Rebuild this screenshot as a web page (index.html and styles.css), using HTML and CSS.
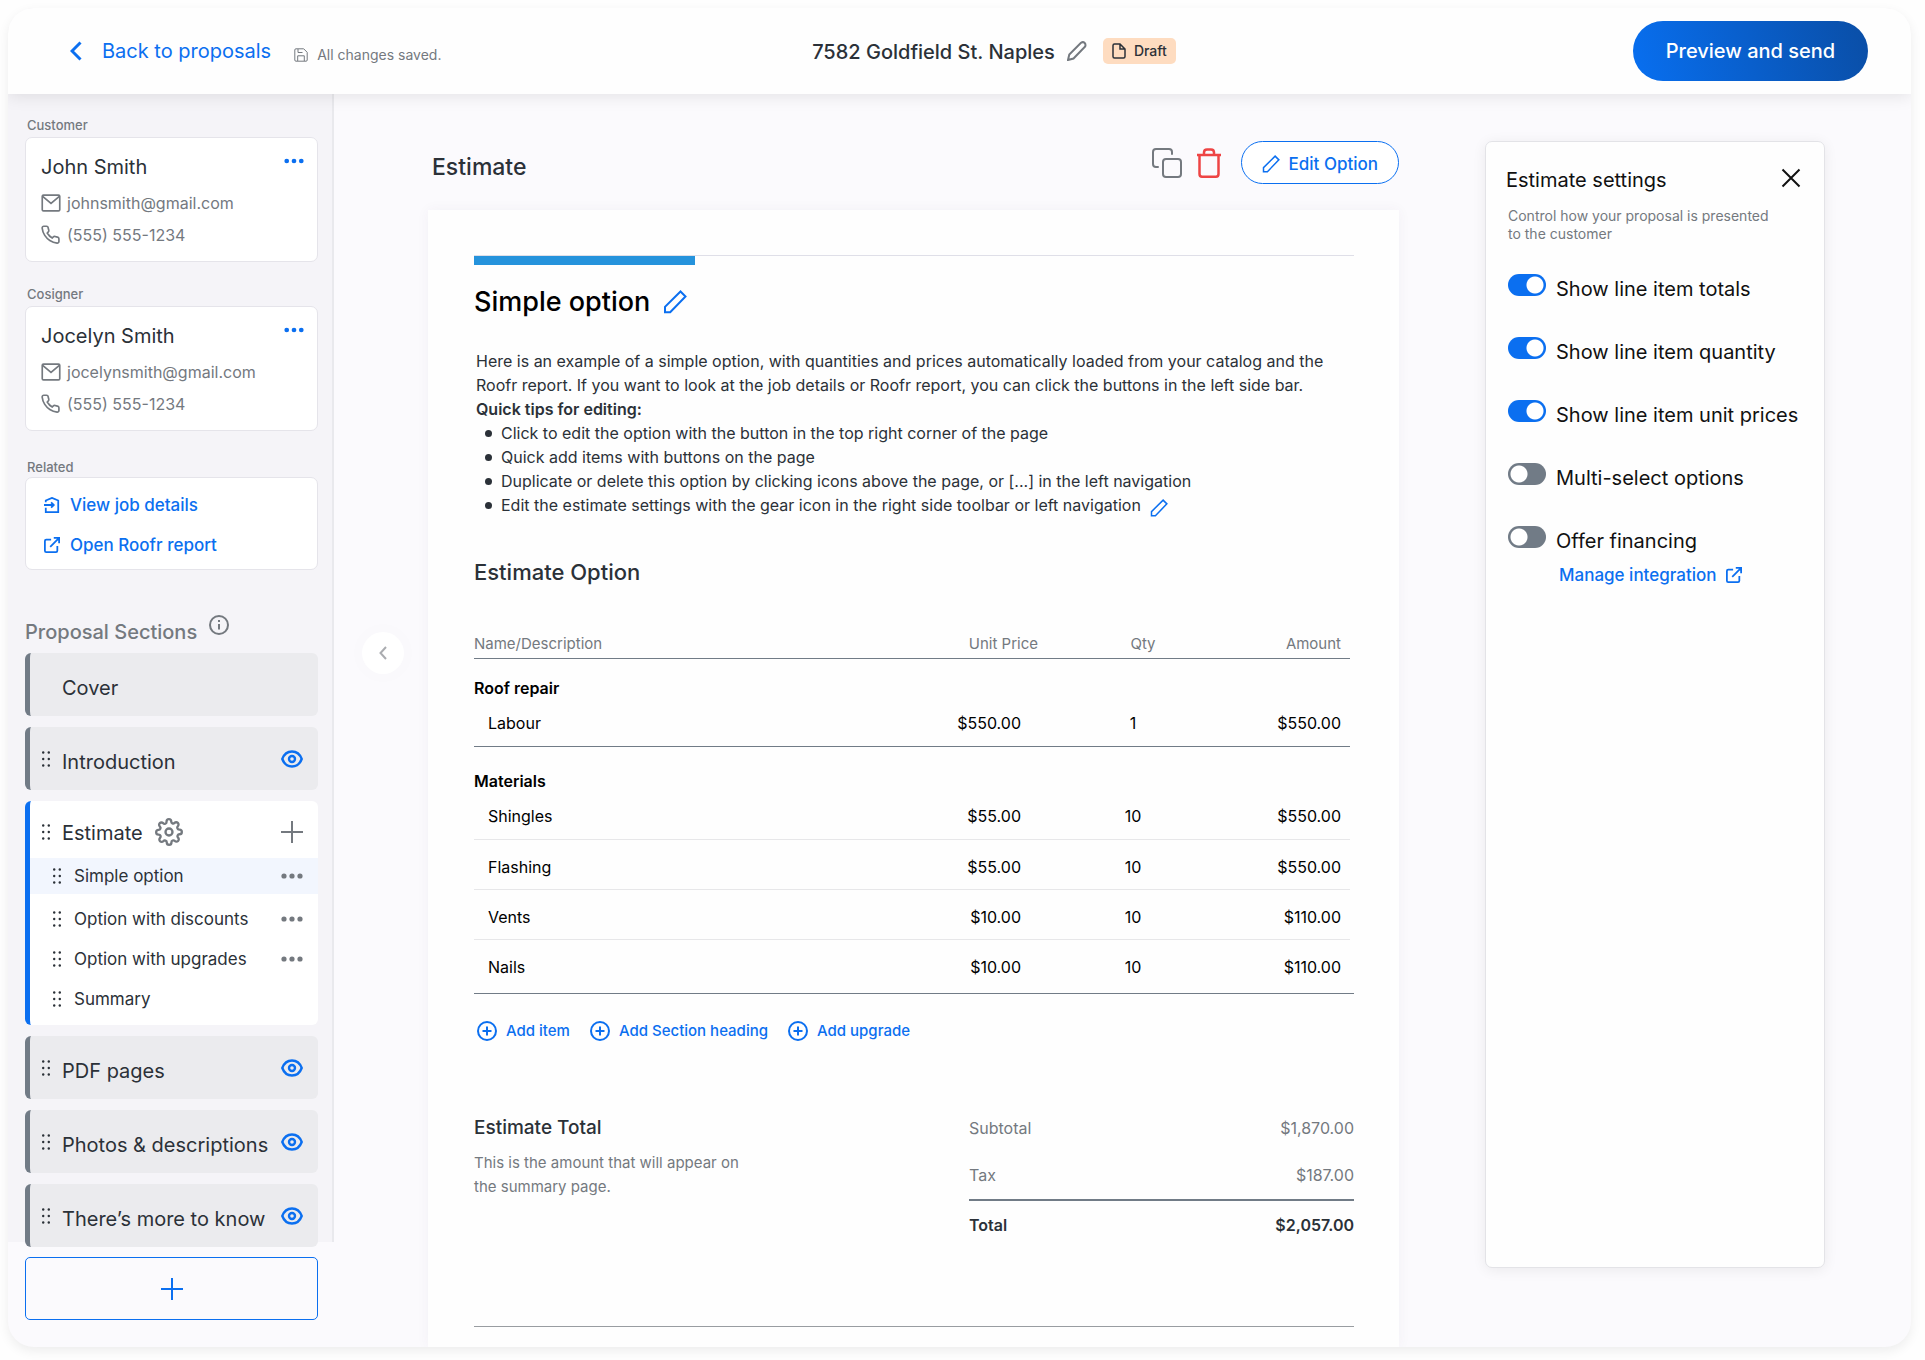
FILE: index.html
```html
<!DOCTYPE html>
<html lang="en">
<head>
<meta charset="utf-8">
<meta name="viewport" content="width=device-width, initial-scale=1">
<title>7582 Goldfield St. Naples – Proposal</title>
<link rel="stylesheet" href="styles.css">
</head>
<body>
<svg class="sprite" aria-hidden="true">
  <symbol id="mail" viewBox="0 0 24 24"><rect x="1.500" y="2.500" width="21" height="19" rx="1.500"/><path d="M2 4l10 8.500L22 4"/></symbol>
  <symbol id="phone" viewBox="0 0 24 24"><path d="M22.500 17.400v3.300a2 2 0 0 1-2.200 2A20 20 0 0 1 11.600 19.600a19.700 19.700 0 0 1-6.100-6.100A20 20 0 0 1 2.400 4.700a2 2 0 0 1 2-2.200h3.200a2 2 0 0 1 2 1.700c.1 1 .4 2 .7 2.900a2 2 0 0 1-.5 2.100L8.500 10.600a16 16 0 0 0 6 6l1.300-1.300a2 2 0 0 1 2.100-.5c.9.300 1.900.6 2.900.7a2 2 0 0 1 1.700 1.900z" transform="translate(-1 -1)"/></symbol>
  <symbol id="grip" viewBox="0 0 8 16"><g class="dot"><circle cx="1.200" cy="1.500" r="1.200"/><circle cx="6.800" cy="1.500" r="1.200"/><circle cx="1.200" cy="8" r="1.200"/><circle cx="6.800" cy="8" r="1.200"/><circle cx="1.200" cy="14.500" r="1.200"/><circle cx="6.800" cy="14.500" r="1.200"/></g></symbol>
  <symbol id="dots" viewBox="0 0 22 6"><g class="dot"><circle cx="3" cy="3" r="2.600"/><circle cx="11" cy="3" r="2.600"/><circle cx="19" cy="3" r="2.600"/></g></symbol>
  <symbol id="eye" viewBox="0 0 22 18"><path d="M1.300 9C3 4.300 6.600 1.500 11 1.500S19 4.300 20.700 9C19 13.700 15.400 16.500 11 16.500S3 13.700 1.300 9z"/><circle cx="11" cy="9" r="3"/></symbol>
  <symbol id="plus" viewBox="0 0 22 22"><path d="M11 0v22M0 11h22"/></symbol>
  <symbol id="plus-circle" viewBox="0 0 20 20"><circle cx="10" cy="10" r="9"/><path d="M10 5.500v9M5.500 10h9"/></symbol>
  <symbol id="external" viewBox="0 0 18 18"><path d="M8 3H2.500Q1 3 1 4.500v11Q1 17 2.500 17h11q1.500 0 1.500-1.500V10M11 1h6v6M17 1L7 11"/></symbol>
  <symbol id="pencil" viewBox="0 0 24 24"><path d="M2 22.300v-5.500L17.500 1.500l5 5L7.200 22.300z"/></symbol>
</svg>

<div class="app">
  <header class="topbar">
    <div class="topbar-left">
      <a class="back" href="#proposals">
        <svg class="chevron" viewBox="0 0 12 20"><path d="M10.500 1.500L2 10l8.500 8.500"/></svg>
        Back to proposals
      </a>
      <span class="saved">
        <svg class="icon-14" viewBox="0 0 14 14"><path d="M2 .8h7.700l3.500 3.500V12q0 1.200-1.200 1.200H2Q.8 13.200.8 12V2Q.8.800 2 .8zM4 1v3.500h4.500M3.700 13V7.800h6.600V13"/></svg>
        All changes saved.
      </span>
    </div>
    <div class="topbar-title">
      <h1>7582 Goldfield St. Naples</h1>
      <button class="icon-button grey" aria-label="Rename proposal">
        <svg class="icon-20" viewBox="0 0 20 20"><path d="M1 19l1.300-5.500L14 1.800q2-1.400 3.500 0t.7 3.700L6.500 17.500z"/></svg>
      </button>
      <span class="badge">
        <svg class="icon-file" viewBox="0 0 14 16"><path d="M2.500 1H8l5 5v7.500q0 1.500-1.500 1.500h-9Q1 15 1 13.500v-11Q1 1 2.500 1zM8 1v5h5"/></svg>
        Draft
      </span>
    </div>
    <button class="send">Preview and send</button>
  </header>

  <div class="body">
    <aside class="sidebar">
      <div class="sidebar-main">
        <section class="contact">
          <h2 class="label">Customer</h2>
          <div class="card">
            <button class="icon-button more blue" aria-label="Customer actions"><svg class="dots-s"><use href="#dots"/></svg></button>
            <h3>John Smith</h3>
            <p><svg class="icon-20"><use href="#mail"/></svg>johnsmith@gmail.com</p>
            <p><svg class="icon-20"><use href="#phone"/></svg>(555) 555-1234</p>
          </div>
        </section>
        <section class="contact">
          <h2 class="label">Cosigner</h2>
          <div class="card">
            <button class="icon-button more blue" aria-label="Cosigner actions"><svg class="dots-s"><use href="#dots"/></svg></button>
            <h3>Jocelyn Smith</h3>
            <p><svg class="icon-20"><use href="#mail"/></svg>jocelynsmith@gmail.com</p>
            <p><svg class="icon-20"><use href="#phone"/></svg>(555) 555-1234</p>
          </div>
        </section>
        <section class="related">
          <h2 class="label">Related</h2>
          <div class="card links">
            <a href="#job"><svg class="icon-16" viewBox="0 0 18 18"><path d="M2 6V4l7-3 7 3v13H2v-5M0 9h11M8 6l3 3-3 3"/></svg>View job details</a>
            <a href="#report"><svg class="icon-16"><use href="#external"/></svg>Open Roofr report</a>
          </div>
        </section>

        <div class="sections-title">
          <h2>Proposal Sections</h2>
          <svg class="icon-20" viewBox="0 0 20 20"><circle cx="10" cy="10" r="9"/><path d="M10 9v5.500M10 5v2"/></svg>
        </div>
        <nav class="sections">
          <div class="item"><span></span><a href="#cover">Cover</a></div>
          <div class="item"><svg class="grip"><use href="#grip"/></svg><a href="#introduction">Introduction</a><button class="icon-button blue" aria-label="Toggle Introduction"><svg class="eye"><use href="#eye"/></svg></button></div>
          <div class="group">
            <div class="group-head">
              <svg class="grip"><use href="#grip"/></svg>
              <a href="#estimate">Estimate</a>
              <button class="icon-button grey gear-button" aria-label="Estimate settings"><svg class="gear" viewBox="0 0 24 24"><circle cx="12" cy="12" r="3"/><path d="M19.400 15a1.650 1.650 0 0 0 .33 1.820l.06.060a2 2 0 1 1-2.830 2.830l-.06-.06a1.650 1.650 0 0 0-2.800 1.180V21a2 2 0 1 1-4 0v-.09a1.650 1.650 0 0 0-2.900-1.080l-.06.060a2 2 0 1 1-2.830-2.830l.06-.06a1.650 1.650 0 0 0-1.180-2.800H3a2 2 0 1 1 0-4h.09a1.650 1.650 0 0 0 1.080-2.900l-.06-.06a2 2 0 1 1 2.830-2.830l.06.060a1.650 1.650 0 0 0 2.900-1.080V3a2 2 0 1 1 4 0v.09a1.650 1.650 0 0 0 2.800 1.180l.06-.06a2 2 0 1 1 2.830 2.830l-.06.060a1.650 1.650 0 0 0 1.180 2.800H21a2 2 0 1 1 0 4h-.09a1.650 1.650 0 0 0-1.510 1z"/></svg></button>
              <button class="icon-button grey" aria-label="Add option"><svg class="plus"><use href="#plus"/></svg></button>
            </div>
            <div class="sub active"><svg class="grip"><use href="#grip"/></svg><a href="#simple">Simple option</a><button class="icon-button grey" aria-label="Simple option actions"><svg class="dots"><use href="#dots"/></svg></button></div>
            <div class="sub"><svg class="grip"><use href="#grip"/></svg><a href="#discounts">Option with discounts</a><button class="icon-button grey" aria-label="Option with discounts actions"><svg class="dots"><use href="#dots"/></svg></button></div>
            <div class="sub"><svg class="grip"><use href="#grip"/></svg><a href="#upgrades">Option with upgrades</a><button class="icon-button grey" aria-label="Option with upgrades actions"><svg class="dots"><use href="#dots"/></svg></button></div>
            <div class="sub"><svg class="grip"><use href="#grip"/></svg><a href="#summary">Summary</a></div>
          </div>
          <div class="item"><svg class="grip"><use href="#grip"/></svg><a href="#pdf">PDF pages</a><button class="icon-button blue" aria-label="Toggle PDF pages"><svg class="eye"><use href="#eye"/></svg></button></div>
          <div class="item"><svg class="grip"><use href="#grip"/></svg><a href="#photos">Photos &amp; descriptions</a><button class="icon-button blue" aria-label="Toggle Photos &amp; descriptions"><svg class="eye"><use href="#eye"/></svg></button></div>
          <div class="item"><svg class="grip"><use href="#grip"/></svg><a href="#more">There’s more to know</a><button class="icon-button blue" aria-label="Toggle There’s more to know"><svg class="eye"><use href="#eye"/></svg></button></div>
        </nav>
      </div>
      <div class="sidebar-foot">
        <button class="add-section" aria-label="Add section"><svg class="plus"><use href="#plus"/></svg></button>
      </div>
    </aside>

    <div class="collapse-column">
      <button class="collapse" aria-label="Collapse sidebar"><svg viewBox="0 0 8 14"><path d="M7 1L1.500 7 7 13"/></svg></button>
    </div>

    <main class="document">
      <div class="toolbar">
        <h2>Estimate</h2>
        <button class="icon-button grey" aria-label="Duplicate option"><svg class="icon-30" viewBox="0 0 30 30"><rect x="11" y="11" width="18" height="18" rx="3"/><path d="M6 19H4Q1 19 1 16V4Q1 1 4 1h13Q20 1 20 4v2"/></svg></button>
        <button class="icon-button red" aria-label="Delete option"><svg class="icon-trash" viewBox="0 0 26 30"><path d="M1 7h24M8 7V4.500Q8 1.500 11 1.500h4Q18 1.500 18 4.500v2.500M3.500 7v19q0 2.700 2.500 2.700h14q2.500 0 2.500-2.700V7"/></svg></button>
        <button class="edit-option"><svg class="icon-18"><use href="#pencil"/></svg>Edit Option</button>
      </div>

      <article class="paper">
        <div class="rule"><span class="rule-accent"></span></div>
        <div class="title-row">
          <h3>Simple option</h3>
          <button class="icon-button blue" aria-label="Edit title"><svg class="icon-24"><use href="#pencil"/></svg></button>
        </div>
        <div class="intro">
          <p>Here is an example of a simple option, with quantities and prices automatically loaded from your catalog and the<br>Roofr report. If you want to look at the job details or Roofr report, you can click the buttons in the left side bar.</p>
          <p><strong>Quick tips for editing:</strong></p>
          <ul>
            <li>Click to edit the option with the button in the top right corner of the page</li>
            <li>Quick add items with buttons on the page</li>
            <li>Duplicate or delete this option by clicking icons above the page, or [...] in the left navigation</li>
            <li>Edit the estimate settings with the gear icon in the right side toolbar or left navigation <button class="icon-button blue inline" aria-label="Edit description"><svg class="icon-18"><use href="#pencil"/></svg></button></li>
          </ul>
        </div>

        <h4 class="table-title">Estimate Option</h4>
        <table>
          <thead>
            <tr><th>Name/Description</th><th class="price">Unit Price</th><th class="qty">Qty</th><th class="amount">Amount</th></tr>
          </thead>
          <tbody>
            <tr class="heading"><th colspan="4">Roof repair</th></tr>
            <tr><td>Labour</td><td class="price">$550.00</td><td class="qty">1</td><td class="amount">$550.00</td></tr>
          </tbody>
          <tbody>
            <tr class="heading"><th colspan="4">Materials</th></tr>
            <tr><td>Shingles</td><td class="price">$55.00</td><td class="qty">10</td><td class="amount">$550.00</td></tr>
            <tr><td>Flashing</td><td class="price">$55.00</td><td class="qty">10</td><td class="amount">$550.00</td></tr>
            <tr><td>Vents</td><td class="price">$10.00</td><td class="qty">10</td><td class="amount">$110.00</td></tr>
            <tr><td>Nails</td><td class="price">$10.00</td><td class="qty">10</td><td class="amount">$110.00</td></tr>
          </tbody>
        </table>
        <div class="actions">
          <button><svg class="icon-20"><use href="#plus-circle"/></svg>Add item</button>
          <button><svg class="icon-20"><use href="#plus-circle"/></svg>Add Section heading</button>
          <button><svg class="icon-20"><use href="#plus-circle"/></svg>Add upgrade</button>
        </div>

        <div class="totals">
          <div class="totals-note">
            <h4>Estimate Total</h4>
            <p>This is the amount that will appear on<br>the summary page.</p>
          </div>
          <dl>
            <div><dt>Subtotal</dt><dd>$1,870.00</dd></div>
            <div><dt>Tax</dt><dd>$187.00</dd></div>
            <div class="grand"><dt>Total</dt><dd>$2,057.00</dd></div>
          </dl>
        </div>
      </article>
    </main>

    <aside class="settings">
      <div class="settings-head">
        <h2>Estimate settings</h2>
        <button class="icon-button" aria-label="Close settings"><svg class="icon-20" viewBox="0 0 20 20"><path d="M1.500 1.500l17 17M18.500 1.500l-17 17"/></svg></button>
      </div>
      <p>Control how your proposal is presented<br>to the customer</p>
      <label><input type="checkbox" checked><span>Show line item totals</span></label>
      <label><input type="checkbox" checked><span>Show line item quantity</span></label>
      <label><input type="checkbox" checked><span>Show line item unit prices</span></label>
      <label><input type="checkbox"><span>Multi-select options</span></label>
      <label><input type="checkbox"><span>Offer financing</span></label>
      <a class="manage" href="#integration">Manage integration<svg class="icon-16"><use href="#external"/></svg></a>
    </aside>
  </div>
</div>
</body>
</html>
```
FILE: styles.css
```css
* { box-sizing: border-box; }

:root {
  --blue: #0b6ff0;
  --ink: #2b3138;
  --grey: #74797f;
  --slate: #717b86;
}

body {
  margin: 0;
  min-height: 100vh;
  padding: 8px 14px 14px 8px;
  display: flex;
  background: #fefefe;
  color: var(--ink);
  font: 400 15px/20px Inter, "Liberation Sans", sans-serif;
}

h1, h2, h3, h4, p, ul, dl, dd { margin: 0; padding: 0; }
a { color: inherit; text-decoration: none; }
button { font: inherit; cursor: pointer; }
svg { display: block; flex: none; fill: none; stroke: currentColor; stroke-width: 2; }
.dot { fill: currentColor; stroke: none; }
.sprite { position: absolute; width: 0; height: 0; }

.icon-button { display: flex; padding: 0; border: 0; background: none; color: #111; }
.icon-button.blue { color: var(--blue); }
.icon-button.grey { color: var(--grey); }
.icon-button.red { color: #ee4444; }
.icon-14 { width: 14px; height: 14px; stroke-width: 1; }
.icon-16 { width: 16px; height: 16px; }
.icon-18 { width: 18px; height: 18px; }
.icon-20 { width: 20px; height: 20px; }
.icon-24 { width: 24px; height: 24px; }
.icon-30 { width: 30px; height: 30px; stroke-linecap: round; }
.icon-trash { width: 26px; height: 30px; stroke-width: 2.5; }
.icon-file { width: 14px; height: 16px; stroke-width: 1.5; }
.chevron { width: 12px; height: 20px; stroke-width: 3; }
.grip { width: 8px; height: 16px; }
.eye { width: 22px; height: 18px; stroke-width: 2.4; }
.dots { width: 22px; height: 6px; }
.dots-s { width: 20px; height: 6px; }
.plus { width: 22px; height: 22px; }
.gear { width: 28px; height: 28px; }

.app {
  flex: 1;
  min-width: 0;
  display: flex;
  flex-direction: column;
  overflow: hidden;
  border-radius: 26px;
  background: #fbfafd;
  box-shadow: 0 4px 12px rgba(0, 0, 0, 0.07);
}

/* Top bar */
.topbar {
  z-index: 1;
  display: grid;
  grid-template-columns: 1fr auto 1fr;
  align-items: center;
  height: 86px;
  padding: 0 43px 0 62px;
  background: #fefefe;
  box-shadow: 0 2px 16px rgba(0, 0, 0, 0.1);
}
.topbar-left, .back, .saved, .topbar-title, .badge { display: flex; align-items: center; }
.topbar-left { gap: 23px; }
.back { gap: 20px; color: var(--blue); font-size: 20px; line-height: 26px; }
.saved { gap: 9px; padding-top: 8px; color: var(--grey); font-size: 14px; }
.topbar-title { gap: 12px; padding-left: 50px; }
.topbar-title h1 { padding-top: 2px; font-size: 20px; line-height: 26px; font-weight: 500; }
.badge { gap: 8px; height: 26px; margin-left: 4px; padding: 0 9px; border-radius: 5px; background: #fedcc0; font-size: 14px; font-weight: 500; }
.send {
  justify-self: end;
  width: 235px;
  height: 60px;
  border: 0;
  border-radius: 30px;
  background: linear-gradient(75deg, #086ff0, #0a4ea6);
  color: #fff;
  font-size: 20px;
  font-weight: 500;
}

.body { flex: 1; display: flex; }

/* Sidebar */
.sidebar { flex: none; width: 326px; display: flex; flex-direction: column; }
.sidebar-main { flex: 1; padding: 21px 14px 0 17px; border-right: 2px solid #e9e9ed; background: #f5f4f8; }
.label { padding-left: 2px; margin-bottom: 2px; color: var(--grey); font-size: 13px; line-height: 20px; font-weight: 500; }
.contact { margin-bottom: 22px; }
.card { position: relative; border: 1px solid #e5e4ea; border-radius: 7px; background: #fff; padding: 15px 15px 10px; }
.card h3 { margin-bottom: 6px; font-size: 20px; line-height: 28px; font-weight: 400; }
.card p { display: flex; align-items: center; gap: 6px; color: var(--grey); font-size: 16px; line-height: 32px; }
.more { position: absolute; top: 20px; right: 13px; }
.related { margin-top: 26px; }
.related .label { margin-bottom: 0; }
.links { padding: 7px 18px 4px; }
.links a { display: flex; align-items: center; gap: 10px; color: var(--blue); font-size: 17px; line-height: 40px; font-weight: 500; }

.sections-title { display: flex; gap: 12px; margin: 45px 0 5px; color: var(--grey); }
.sections-title h2 { font-size: 20px; line-height: 32px; font-weight: 500; padding-top: 1px; }
.sections { display: grid; gap: 11px; margin-bottom: -5px; }
.item, .group-head, .sub { display: grid; align-items: center; }
.item {
  grid-template-columns: 8px 1fr auto;
  gap: 12px;
  height: 63px;
  padding: 0 15px 0 12px;
  border-left: 5px solid var(--slate);
  border-radius: 6px;
  background: #ebebee;
}
.item a { padding-top: 6px; }
.item a, .group-head a { font-size: 20px; line-height: 24px; white-space: nowrap; }
.group { padding-bottom: 6px; border-left: 5px solid var(--blue); border-radius: 6px; background: #fff; }
.group-head { grid-template-columns: 8px auto 1fr auto; gap: 12px; height: 57px; padding: 4px 15px 0 12px; }
.group-head a { padding-top: 2px; }
.sub { grid-template-columns: 8px 1fr auto; gap: 13px; height: 40px; padding: 0 15px 0 23px; font-size: 17px; }
.sub.active { height: 36px; margin-bottom: 5px; background: #f2f6fe; }
.sidebar-foot { padding: 15px 16px 27px 17px; }
.add-section {
  display: flex;
  align-items: center;
  justify-content: center;
  width: 100%;
  height: 63px;
  border: 1px solid var(--blue);
  border-radius: 5px;
  background: none;
  color: var(--blue);
}

.collapse-column { flex: none; width: 94px; padding: 538px 0 0 28px; }
.collapse {
  display: grid;
  place-items: center;
  width: 42px;
  height: 42px;
  padding: 0;
  border: 0;
  border-radius: 50%;
  background: #fff;
  color: #aaacb0;
  box-shadow: 0 0 30px rgba(0, 0, 0, 0.02);
}
.collapse svg { width: 8px; height: 14px; }

/* Document */
.document { flex: 1; min-width: 0; display: flex; flex-direction: column; padding-top: 47px; }
.toolbar { display: flex; align-items: center; gap: 14px; height: 43px; margin-bottom: 26px; padding-left: 4px; }
.toolbar h2 { flex: 1; padding-top: 9px; font-size: 23px; line-height: 28px; font-weight: 500; }
.edit-option {
  display: flex;
  align-items: center;
  gap: 9px;
  height: 43px;
  margin-left: 5px;
  padding: 2px 20px 0;
  border: 1px solid var(--blue);
  border-radius: 22px;
  background: #fff;
  color: var(--blue);
  font-size: 17px;
  font-weight: 500;
}
.paper { flex: 1; padding: 45px 45px 19px 46px; background: #fefefe; box-shadow: 0 0 12px rgba(70, 60, 100, 0.05); }
.rule { height: 10px; border-top: 1px solid #dfdfe8; }
.rule-accent { display: block; width: 221px; height: 9px; background: #2593dc; }
.title-row { display: flex; align-items: center; gap: 13px; margin: 18px 0 29px; color: #000; }
.title-row h3 { padding-top: 1px; font-size: 27px; line-height: 36px; font-weight: 500; }
.intro { padding-left: 2px; font-size: 16px; line-height: 24px; }
.intro strong { font-weight: 600; }
.intro ul { list-style: none; }
.intro li { display: flex; align-items: center; gap: 9px; height: 24px; padding-left: 9px; white-space: nowrap; }
.intro li::before { content: ""; flex: none; width: 7px; height: 7px; border-radius: 50%; background: currentColor; }
.inline { padding-top: 6px; }
.table-title { margin: 41px 0 48px; font-size: 22px; line-height: 28px; font-weight: 500; }

table { width: calc(100% - 4px); border-collapse: separate; border-spacing: 0; color: #000; table-layout: fixed; }
th, td { padding: 0; text-align: left; line-height: 20px; }
thead th { padding-bottom: 4px; border-bottom: 1px solid var(--slate); color: var(--grey); font-weight: 400; }
tbody { font-size: 16px; }
.heading th { padding: 24px 0 8px; font-weight: 600; }
thead + tbody .heading th { padding-top: 19px; }
td { padding: 17px 0 12px; border-bottom: 1px solid #e7e7e9; }
td:first-child { padding-left: 14px; }
.heading + tr td { padding-top: 7px; padding-bottom: 13px; }
thead + tbody tr:last-child td { border-color: var(--slate); }
tbody:last-child tr:last-child td { padding-bottom: 16px; border: 0; }
.price { width: 140px; text-align: right; }
td.price { padding-right: 17px; }
.qty { width: 210px; text-align: center; }
td.qty { padding-right: 20px; }
.amount { width: 102px; padding-right: 9px; text-align: right; }

.actions { display: flex; gap: 20px; padding: 27px 0 0 3px; border-top: 1px solid var(--slate); }
.actions button { display: flex; align-items: center; gap: 9px; padding: 0; border: 0; background: none; color: var(--blue); font-size: 15px; font-weight: 500; }
.totals { display: flex; justify-content: space-between; margin-top: 64px; padding-bottom: 76px; border-bottom: 1px solid #999da1; }
.totals-note { padding-top: 9px; color: var(--grey); line-height: 24px; }
.totals-note h4 { margin-bottom: 9px; color: var(--ink); font-size: 19px; line-height: 28px; font-weight: 500; }
.totals dl { width: 385px; color: var(--grey); font-size: 16px; line-height: 47px; }
.totals dl div { display: flex; justify-content: space-between; }
.totals .grand { border-top: 2px solid var(--slate); color: var(--ink); font-weight: 600; line-height: 49px; }

/* Settings */
.settings {
  flex: none;
  width: 340px;
  margin: 47px 86px 79px;
  padding: 22px 20px;
  border: 1px solid #e3e3e7;
  border-radius: 7px;
  background: #fefefe;
  color: #111;
  box-shadow: 0 2px 14px rgba(0, 0, 0, 0.07);
}
.settings-head { display: flex; justify-content: space-between; padding: 0 3px 0 0; }
.settings-head h2 { padding-top: 2px; font-size: 20px; line-height: 28px; font-weight: 400; }
.settings-head button { padding: 4px 0; }
.settings p { margin: 13px 0 28px 2px; color: var(--grey); font-size: 14px; line-height: 18px; }
.settings label { display: flex; align-items: flex-start; gap: 10px; height: 63px; margin-left: 2px; font-size: 20px; line-height: 36px; white-space: nowrap; }
.settings input {
  appearance: none;
  width: 38px;
  height: 22px;
  margin: 3px 0 0;
  border-radius: 11px;
  background: radial-gradient(circle at 11px 11px, #fff 8px, transparent 9px) var(--slate);
}
.settings input:checked { background: radial-gradient(circle at 27px 11px, #fff 8px, transparent 9px) var(--blue); }
.manage { display: flex; align-items: center; gap: 10px; margin: -21px 0 0 53px; color: var(--blue); font-size: 17px; line-height: 20px; font-weight: 500; }
```
